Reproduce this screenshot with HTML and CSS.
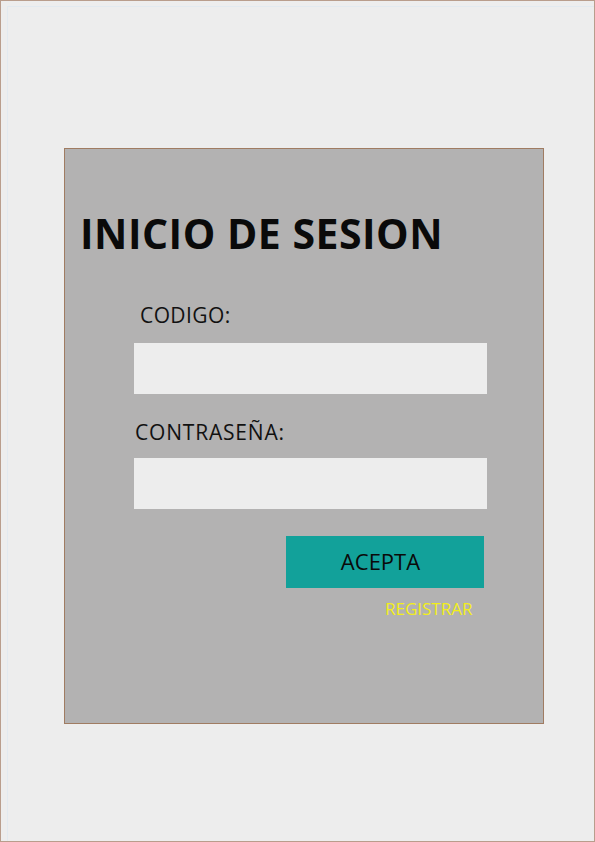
FILE: index.html
```html
<!DOCTYPE html>
<html lang="es">
<head>
<meta charset="utf-8">
<title>Inicio de sesion</title>
<link rel="stylesheet" href="styles.css">
</head>
<body>
<div class="page">
  <div class="sheet">
    <div class="panel">
      <h1 class="title">INICIO DE SESION</h1>
      <form class="form">
        <label class="label label-code">CODIGO:</label>
        <div class="field"></div>
        <label class="label label-pass">CONTRASEÑA:</label>
        <div class="field"></div>
        <div class="btn">ACEPTA</div>
        <div class="link">REGISTRAR</div>
      </form>
    </div>
  </div>
</div>
</body>
</html>
```

FILE: styles.css
```css
* { box-sizing: border-box; }
html, body { margin: 0; padding: 0; }
body { background: #ededed; font-family: "Open Sans", "Noto Sans", sans-serif; }

.page {
  width: 595px;
  height: 842px;
  border: 1px solid #b99d8c;
  background: #ededed;
  padding: 5px 0 0 6px;
}
.sheet {
  height: 100%;
  border-top: 1px solid #e2e9ef;
  border-left: 1px solid #e2e9ef;
}
.panel {
  margin: 141px 0 0 56px;
  width: 480px;
  height: 576px;
  background: #b3b2b2;
  border: 1px solid #a07c62;
}
.title {
  margin: 59px 0 0 15px;
  font-size: 41px;
  line-height: 50px;
  font-weight: 700;
  color: #0a0a0a;
  letter-spacing: 0.5px;
}
.form {
  margin: 45px 0 0 69px;
  width: 353px;
  display: flex;
  flex-direction: column;
}
.label {
  display: block;
  font-size: 21px;
  line-height: 24px;
  color: #111;
}
.label-code { padding-left: 6px; letter-spacing: 0.4px; }
.label-pass { padding-left: 1px; margin-top: 26px; letter-spacing: 0.8px; }
.field {
  height: 51px;
  background: #ededed;
  margin-top: 16px;
}
.label-pass + .field { margin-top: 14px; }
.btn {
  margin: 27px 0 0 152px;
  width: 198px;
  height: 52px;
  background: #12a19a;
  color: #0a0a0a;
  font-size: 22px;
  display: flex;
  align-items: center;
  justify-content: center;
  padding-right: 9px;
  padding-bottom: 2px;
}
.link {
  margin: 11px 0 0 251px;
  font-size: 17px;
  line-height: 20px;
  color: #f2ee1a;
}
```
